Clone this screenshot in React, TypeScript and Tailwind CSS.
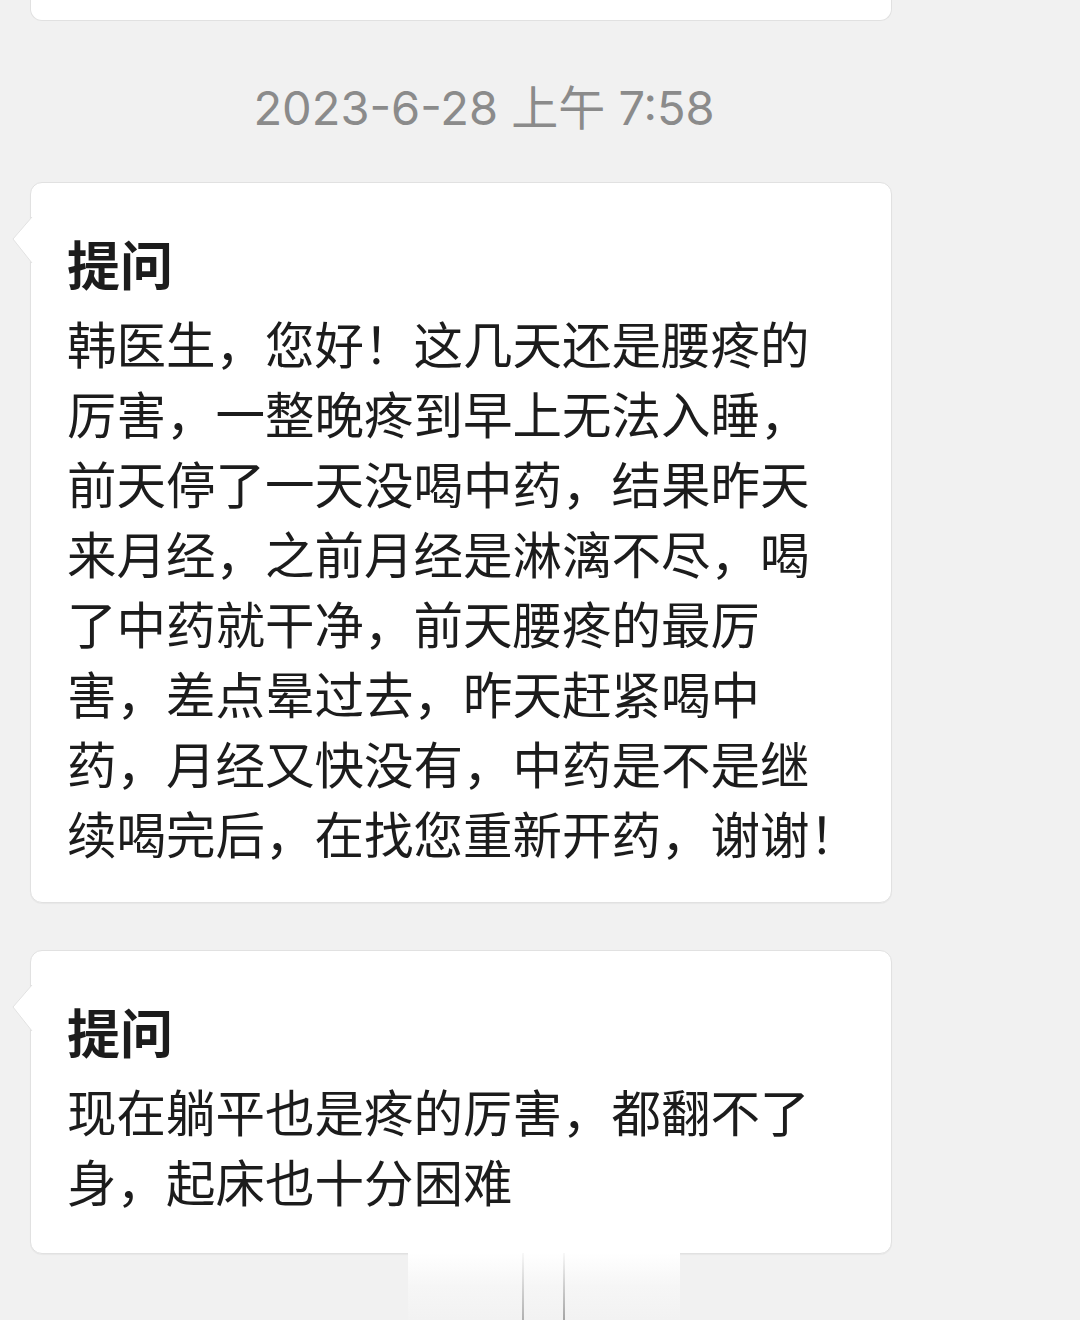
const cjk = { fontFamily: '"Noto Sans CJK SC", "Noto Sans", sans-serif' };

type Message = {
  title: string;
  lines: string[];
  pb: string;
};

const messages: Message[] = [
  {
    title: '提问',
    lines: [
      '韩医生，您好！这几天还是腰疼的',
      '厉害，一整晚疼到早上无法入睡，',
      '前天停了一天没喝中药，结果昨天',
      '来月经，之前月经是淋漓不尽，喝',
      '了中药就干净，前天腰疼的最厉',
      '害，差点晕过去，昨天赶紧喝中',
      '药，月经又快没有，中药是不是继',
      '续喝完后，在找您重新开药，谢谢！',
    ],
    pb: 'pb-[34px]',
  },
  {
    title: '提问',
    lines: ['现在躺平也是疼的厉害，都翻不了', '身，起床也十分困难'],
    pb: 'pb-[37px]',
  },
];

function Tail() {
  return (
    <svg
      className="absolute left-[-19px] top-[34px]"
      width="21"
      height="46"
      viewBox="0 0 21 46"
    >
      <path d="M20 0 L1 22 L20 46 Z" fill="#ffffff" />
      <path d="M20 0 L1 22 L20 46" fill="none" stroke="#e2e2e2" strokeWidth="1" />
    </svg>
  );
}

function Bubble({ msg }: { msg: Message }) {
  return (
    <div
      className={`relative flex w-[862px] flex-col rounded-[12px] border border-[#e1e1e1] bg-white pl-[36px] pt-[38px] shadow-[0_1px_1px_rgba(0,0,0,0.04)] ${msg.pb}`}
    >
      <Tail />
      <div className="text-[53px] font-bold leading-[84px] text-[#1c1c1c]" style={cjk}>
        {msg.title}
      </div>
      <div className="mt-[3px] flex flex-col text-[49.5px] leading-[70px] text-[#1c1c1c]" style={cjk}>
        {msg.lines.map((line) => (
          <div key={line} className="whitespace-nowrap">
            {line}
          </div>
        ))}
      </div>
    </div>
  );
}

export default function App() {
  return (
    <div className="relative flex h-[1320px] w-[1080px] flex-col overflow-hidden bg-[#f1f1f1] pl-[30px]">
      <div className="h-[21px] w-[862px] shrink-0 rounded-b-[12px] border-x border-b border-[#e1e1e1] bg-white" />

      <div
        className="mt-[56px] w-[908px] text-center text-[47px] leading-[62px] text-[#8b8b8b]"
        style={{ fontFamily: 'Inter, "Noto Sans CJK SC", sans-serif' }}
      >
        2023-6-28 上午 7:58
      </div>

      <div className="mt-[43px] flex flex-col gap-[47px]">
        {messages.map((msg, i) => (
          <Bubble key={i} msg={msg} />
        ))}
      </div>

      {/* faint overlay at the bottom edge */}
      <div className="absolute left-[408px] top-[1253px] h-[67px] w-[272px] bg-gradient-to-b from-white via-[#f6f6f6] to-[#f2f2f2]" />
      <div className="absolute left-[522px] top-[1253px] h-[67px] w-[2px] bg-gradient-to-b from-[#f8f8f8] to-[#b0b0b0]" />
      <div className="absolute left-[563px] top-[1253px] h-[67px] w-[2px] bg-gradient-to-b from-[#f8f8f8] to-[#a5a5a5]" />
    </div>
  );
}
